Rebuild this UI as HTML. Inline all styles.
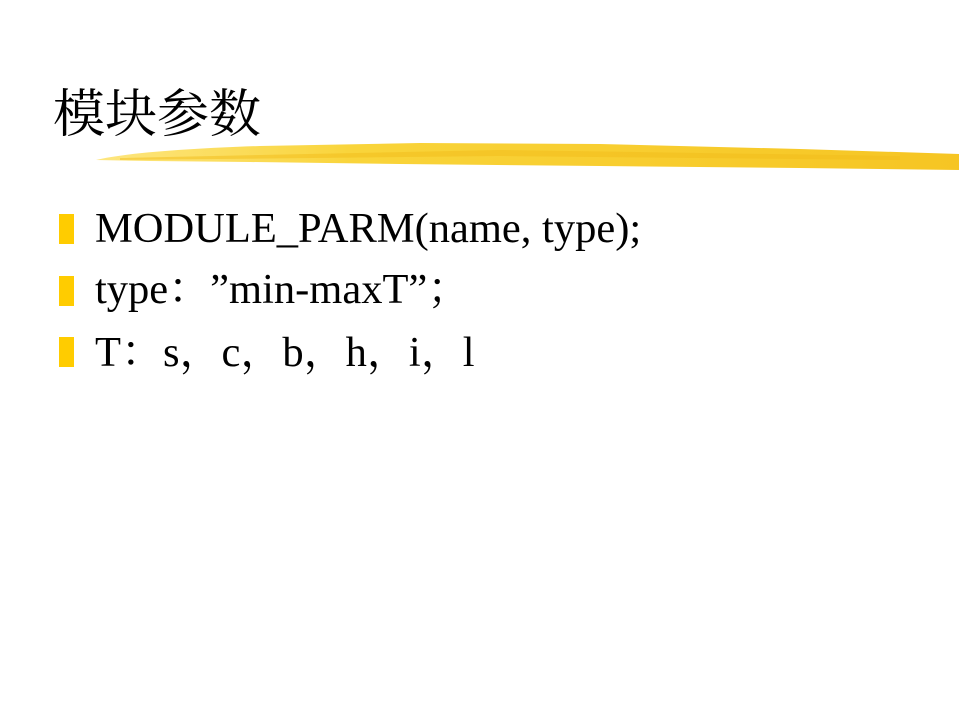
<!DOCTYPE html>
<html><head><meta charset="utf-8"><style>
body{margin:0;width:959px;height:719px;background:#fff;position:relative;overflow:hidden}
.t{position:absolute;left:53px;top:80px;font:52px "Noto Serif CJK SC","WenQuanYi Zen Hei",serif;color:#000;line-height:60px;white-space:nowrap}
.b{position:absolute;left:59px;width:15px;height:30px;background:#ffcc00}
.l{position:absolute;left:95px;font:42.5px "Liberation Serif",serif;color:#000;white-space:nowrap;line-height:50px;height:50px}
.c{display:inline-block;width:42px;font-family:"Noto Serif CJK SC",serif;line-height:0;font-feature-settings:"halt" 0,"chws" 0}
</style></head><body>
<div class="t">模块参数</div>
<svg style="position:absolute;left:0;top:0" width="959" height="719">
<defs><linearGradient id="g" x1="0" x2="1"><stop offset="0" stop-color="#fde680"/><stop offset="0.3" stop-color="#f9d43a"/><stop offset="1" stop-color="#f6c523"/></linearGradient></defs>
<path d="M96 160 C130 152 200 148 260 146 L420 143 L600 144 L800 149 L959 154 L959 170 L800 168 L600 166 L400 164 L250 162 L150 161 Z" fill="url(#g)"/>
<path d="M120 158 L500 150 L900 156 L900 160 L500 156 L120 160Z" fill="#f2bc1a" opacity=".5"/>
</svg>
<div class="b" style="top:214px"></div>
<div class="b" style="top:276px"></div>
<div class="b" style="top:337px"></div>
<div class="l" style="top:204px">MODULE_PARM(name, type);</div>
<div class="l" style="top:265px">type<span class="c">：</span>”min-maxT”<span class="c">；</span></div>
<div class="l" style="top:328px">T<span class="c">：</span>s<span class="c">，</span>c<span class="c">，</span>b<span class="c">，</span>h<span class="c">，</span>i<span class="c">，</span>l</div>
</body></html>
